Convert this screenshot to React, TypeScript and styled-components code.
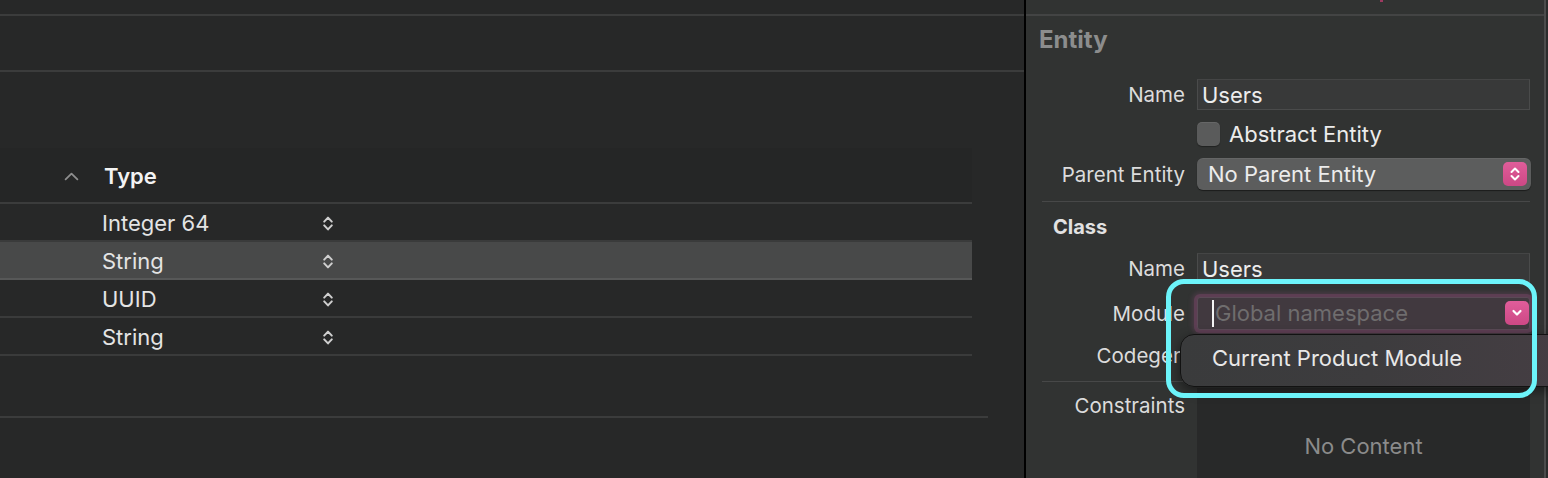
import React from "react";
import styled, { createGlobalStyle } from "styled-components";

const GlobalStyle = createGlobalStyle`
  * { box-sizing: border-box; }
  html, body { margin: 0; padding: 0; background: #272828; }
  body {
    font-family: Inter, "Noto Sans", "Liberation Sans", sans-serif;
    -webkit-font-smoothing: antialiased;
  }
`;

const Screen = styled.div`
  position: relative;
  display: flex;
  width: 1548px;
  height: 478px;
  overflow: hidden;
  font-family: Inter, "Noto Sans", "Liberation Sans", sans-serif;
`;

/* ---------- Left: attributes editor ---------- */
const EditorPane = styled.div`
  flex: none;
  width: 1024px;
  display: flex;
  flex-direction: column;
  background: #272828;
`;

const Band = styled.div<{ $h: number }>`
  flex: none;
  height: ${(p) => p.$h}px;
  border-bottom: 2px solid #3b3c3c;
`;

const AttributesTable = styled.div`
  margin-top: 76px;
  width: 972px;
  display: flex;
  flex-direction: column;
`;

const HeaderRow = styled.div`
  height: 56px;
  display: grid;
  grid-template-columns: 104px 1fr;
  align-items: center;
  padding-top: 2px;
  background: #252626;
  border-bottom: 2px solid #3b3c3c;
`;

const SortCell = styled.div`
  display: flex;
  justify-content: flex-end;
  padding-right: 25px;
`;

const HeaderTitle = styled.div`
  font-size: 22px;
  line-height: 22px;
  font-weight: 600;
  color: #f3f3f3;
`;

const AttrRow = styled.div<{ $selected?: boolean }>`
  height: 38px;
  display: grid;
  grid-template-columns: 102px 220px 1fr;
  align-items: center;
  padding-top: 2px;
  background: ${(p) => (p.$selected ? "#484949" : "transparent")};
  border-bottom: 2px solid ${(p) => (p.$selected ? "#575858" : "#3a3b3b")};
`;

const TypeText = styled.div`
  grid-column: 2;
  font-size: 22px;
  line-height: 22px;
  color: #e4e4e4;
`;

const StepperCell = styled.div`
  grid-column: 3;
  display: flex;
  align-items: center;
`;

const BottomRule = styled.div`
  margin-top: 60px;
  width: 988px;
  height: 2px;
  background: #3b3c3c;
`;

const PaneDivider = styled.div`
  flex: none;
  width: 2px;
  background: #000;
`;

/* ---------- Right: inspector ---------- */
const InspectorPane = styled.div`
  flex: 1;
  display: flex;
  background: #313332;
`;

const Inspector = styled.div`
  flex: 1;
  min-width: 0;
  display: flex;
  flex-direction: column;
`;

const ScrollEdge = styled.div`
  flex: none;
  width: 4px;
  border-left: 2px solid #4b4c4c;
  background: #2b2c2c;
`;

const TopStrip = styled.div`
  flex: none;
  height: 16px;
  border-bottom: 2px solid #434444;
`;

const SectionTitle = styled.div<{ $h: number; $pl: number; $size: number; $color: string }>`
  flex: none;
  height: ${(p) => p.$h}px;
  display: flex;
  align-items: center;
  padding-left: ${(p) => p.$pl}px;
  font-size: ${(p) => p.$size}px;
  line-height: ${(p) => p.$size}px;
  font-weight: 700;
  color: ${(p) => p.$color};
`;

const FormSection = styled.div<{ $mt?: number }>`
  flex: none;
  margin-top: ${(p) => p.$mt ?? 0}px;
  display: flex;
  flex-direction: column;
`;

const FormRow = styled.div<{ $h: number }>`
  height: ${(p) => p.$h}px;
  display: grid;
  grid-template-columns: 159px 333px;
  column-gap: 12px;
  align-items: center;
`;

const Label = styled.div`
  justify-self: end;
  padding-top: 2px;
  font-size: 20.5px;
  line-height: 22px;
  color: #dcdcdc;
  white-space: nowrap;
`;

const TextField = styled.div`
  height: 31px;
  display: flex;
  align-items: center;
  padding: 1px 0 0 4px;
  background: #383939;
  border: 1px solid #4a4b4b;
  border-top-color: #444545;
  font-size: 22px;
  color: #ededed;
`;

const CheckLine = styled.div`
  display: flex;
  align-items: center;
  gap: 9px;
`;

const CheckBox = styled.div`
  width: 23px;
  height: 24px;
  border-radius: 5px;
  background: #5a5b5b;
  box-shadow: inset 0 1px 0 rgba(255, 255, 255, 0.08), 0 1px 1px rgba(0, 0, 0, 0.35);
`;

const ValueText = styled.span`
  font-size: 22px;
  line-height: 22px;
  color: #ececec;
  white-space: nowrap;
`;

const PopUp = styled.div`
  height: 32px;
  margin-right: -1px;
  display: flex;
  align-items: center;
  justify-content: space-between;
  padding: 0 4px 0 11px;
  border-radius: 6px;
  background: #5c5d5d;
  box-shadow: 0 1px 1px rgba(0, 0, 0, 0.45), inset 0 1px 0 rgba(255, 255, 255, 0.06);
`;

const AccentButton = styled.div<{ $w: number }>`
  flex: none;
  width: ${(p) => p.$w}px;
  height: 24px;
  border-radius: 5px;
  background: linear-gradient(#e05d9a, #cd4885);
  display: flex;
  align-items: center;
  justify-content: center;
`;

const Separator = styled.div<{ $mt: number }>`
  flex: none;
  height: 1px;
  margin: ${(p) => p.$mt}px 14px 0 16px;
  background: #474848;
`;

const ComboField = styled.div`
  height: 33px;
  display: flex;
  align-items: center;
  background: #41393f;
  border: 1px solid #5a4a56;
  border-radius: 3px;
  box-shadow: 0 0 0 3px rgba(120, 70, 105, 0.45), 0 0 4px 5px rgba(120, 70, 105, 0.32);
`;

const Caret = styled.div`
  width: 2px;
  height: 27px;
  margin-left: 14px;
  background: #f4f4f4;
`;

const Placeholder = styled.span`
  margin-left: 1px;
  font-size: 22px;
  line-height: 22px;
  color: #6f6d6e;
  white-space: nowrap;
`;

const ComboButton = styled(AccentButton)`
  margin-left: auto;
  margin-right: 0;
`;

const ConstraintsRow = styled.div`
  flex: 1;
  display: grid;
  grid-template-columns: 159px 333px;
  column-gap: 12px;
  align-items: start;
`;

const TopLabel = styled(Label)`
  margin-top: 11px;
`;

const ConstraintsTable = styled.div`
  margin-top: 6px;
  height: 120px;
  display: flex;
  justify-content: center;
  padding-top: 46px;
  background: #282929;
`;

const EmptyText = styled.span`
  font-size: 22px;
  line-height: 24px;
  color: #8b8b8b;
`;

/* ---------- overlays ---------- */
const Menu = styled.div`
  position: absolute;
  left: 1180px;
  top: 334px;
  width: 420px;
  height: 53px;
  display: flex;
  align-items: center;
  padding: 0 0 5px 31px;
  border-radius: 14px;
  border: 1px solid #121212;
  background: linear-gradient(90deg, #3a3b3c 0%, #3d3c3e 45%, #463e44 100%);
  box-shadow: 0 4px 12px rgba(0, 0, 0, 0.45);
`;

const MenuItem = styled.span`
  font-size: 22px;
  line-height: 22px;
  color: #e8e8e8;
  white-space: nowrap;
`;

const Callout = styled.div`
  position: absolute;
  left: 1166px;
  top: 279px;
  width: 371px;
  height: 119px;
  border: 5px solid #6cf4fa;
  border-radius: 18px;
  pointer-events: none;
`;

const ClippedMark = styled.div`
  position: absolute;
  left: 1380px;
  top: 0;
  width: 3px;
  height: 2px;
  background: #9c3a60;
`;

/* ---------- icons ---------- */
const Stepper = () => (
  <svg width="12" height="17" viewBox="0 0 12 17" fill="none">
    <path d="M2.2 6.6 L6 2.6 L9.8 6.6" stroke="#cfcfcf" strokeWidth="2" strokeLinecap="round" strokeLinejoin="round" />
    <path d="M2.2 10.4 L6 14.4 L9.8 10.4" stroke="#cfcfcf" strokeWidth="2" strokeLinecap="round" strokeLinejoin="round" />
  </svg>
);

const SortUp = () => (
  <svg width="15" height="9" viewBox="0 0 15 9" fill="none">
    <path d="M1.6 7.4 L7.5 1.6 L13.4 7.4" stroke="#8e8e8e" strokeWidth="1.8" strokeLinecap="round" strokeLinejoin="round" />
  </svg>
);

const UpDown = () => (
  <svg width="12" height="16" viewBox="0 0 12 16" fill="none">
    <path d="M2.5 6 L6 2.5 L9.5 6" stroke="#fff" strokeWidth="2" strokeLinecap="round" strokeLinejoin="round" />
    <path d="M2.5 10 L6 13.5 L9.5 10" stroke="#fff" strokeWidth="2" strokeLinecap="round" strokeLinejoin="round" />
  </svg>
);

const Down = () => (
  <svg width="12" height="8" viewBox="0 0 12 8" fill="none">
    <path d="M2.5 2 L6 5.5 L9.5 2" stroke="#fff" strokeWidth="2.2" strokeLinecap="round" strokeLinejoin="round" />
  </svg>
);

const types: { name: string; selected?: boolean }[] = [
  { name: "Integer 64" },
  { name: "String", selected: true },
  { name: "UUID" },
  { name: "String" },
];

export default function App() {
  return (
    <>
      <GlobalStyle />
      <Screen>
        <EditorPane>
          <Band $h={16} />
          <Band $h={56} />
          <AttributesTable>
            <HeaderRow>
              <SortCell>
                <SortUp />
              </SortCell>
              <HeaderTitle>Type</HeaderTitle>
            </HeaderRow>
            {types.map((t, i) => (
              <AttrRow key={i} $selected={t.selected}>
                <TypeText>{t.name}</TypeText>
                <StepperCell>
                  <Stepper />
                </StepperCell>
              </AttrRow>
            ))}
          </AttributesTable>
          <BottomRule />
        </EditorPane>

        <PaneDivider />

        <InspectorPane>
          <Inspector>
            <TopStrip />
            <SectionTitle $h={47} $pl={13} $size={24} $color="#8c8d8d">
              Entity
            </SectionTitle>
            <FormSection $mt={11}>
              <FormRow $h={40}>
                <Label>Name</Label>
                <TextField>Users</TextField>
              </FormRow>
              <FormRow $h={40}>
                <span />
                <CheckLine>
                  <CheckBox />
                  <ValueText>Abstract Entity</ValueText>
                </CheckLine>
              </FormRow>
              <FormRow $h={40}>
                <Label>Parent Entity</Label>
                <PopUp>
                  <ValueText>No Parent Entity</ValueText>
                  <AccentButton $w={24}>
                    <UpDown />
                  </AccentButton>
                </PopUp>
              </FormRow>
            </FormSection>
            <Separator $mt={7} />
            <SectionTitle $h={49} $pl={27} $size={20} $color="#e2e2e2">
              Class
            </SectionTitle>
            <FormSection>
              <FormRow $h={34}>
                <Label>Name</Label>
                <TextField>Users</TextField>
              </FormRow>
              <FormRow $h={56}>
                <Label>Module</Label>
                <ComboField>
                  <Caret />
                  <Placeholder>Global namespace</Placeholder>
                  <ComboButton $w={24}>
                    <Down />
                  </ComboButton>
                </ComboField>
              </FormRow>
              <FormRow $h={28}>
                <Label>Codegen</Label>
                <span />
              </FormRow>
            </FormSection>
            <Separator $mt={12} />
            <ConstraintsRow>
              <TopLabel>Constraints</TopLabel>
              <ConstraintsTable>
                <EmptyText>No Content</EmptyText>
              </ConstraintsTable>
            </ConstraintsRow>
          </Inspector>
          <ScrollEdge />
        </InspectorPane>

        <ClippedMark />
        <Menu>
          <MenuItem>Current Product Module</MenuItem>
        </Menu>
        <Callout />
      </Screen>
    </>
  );
}
